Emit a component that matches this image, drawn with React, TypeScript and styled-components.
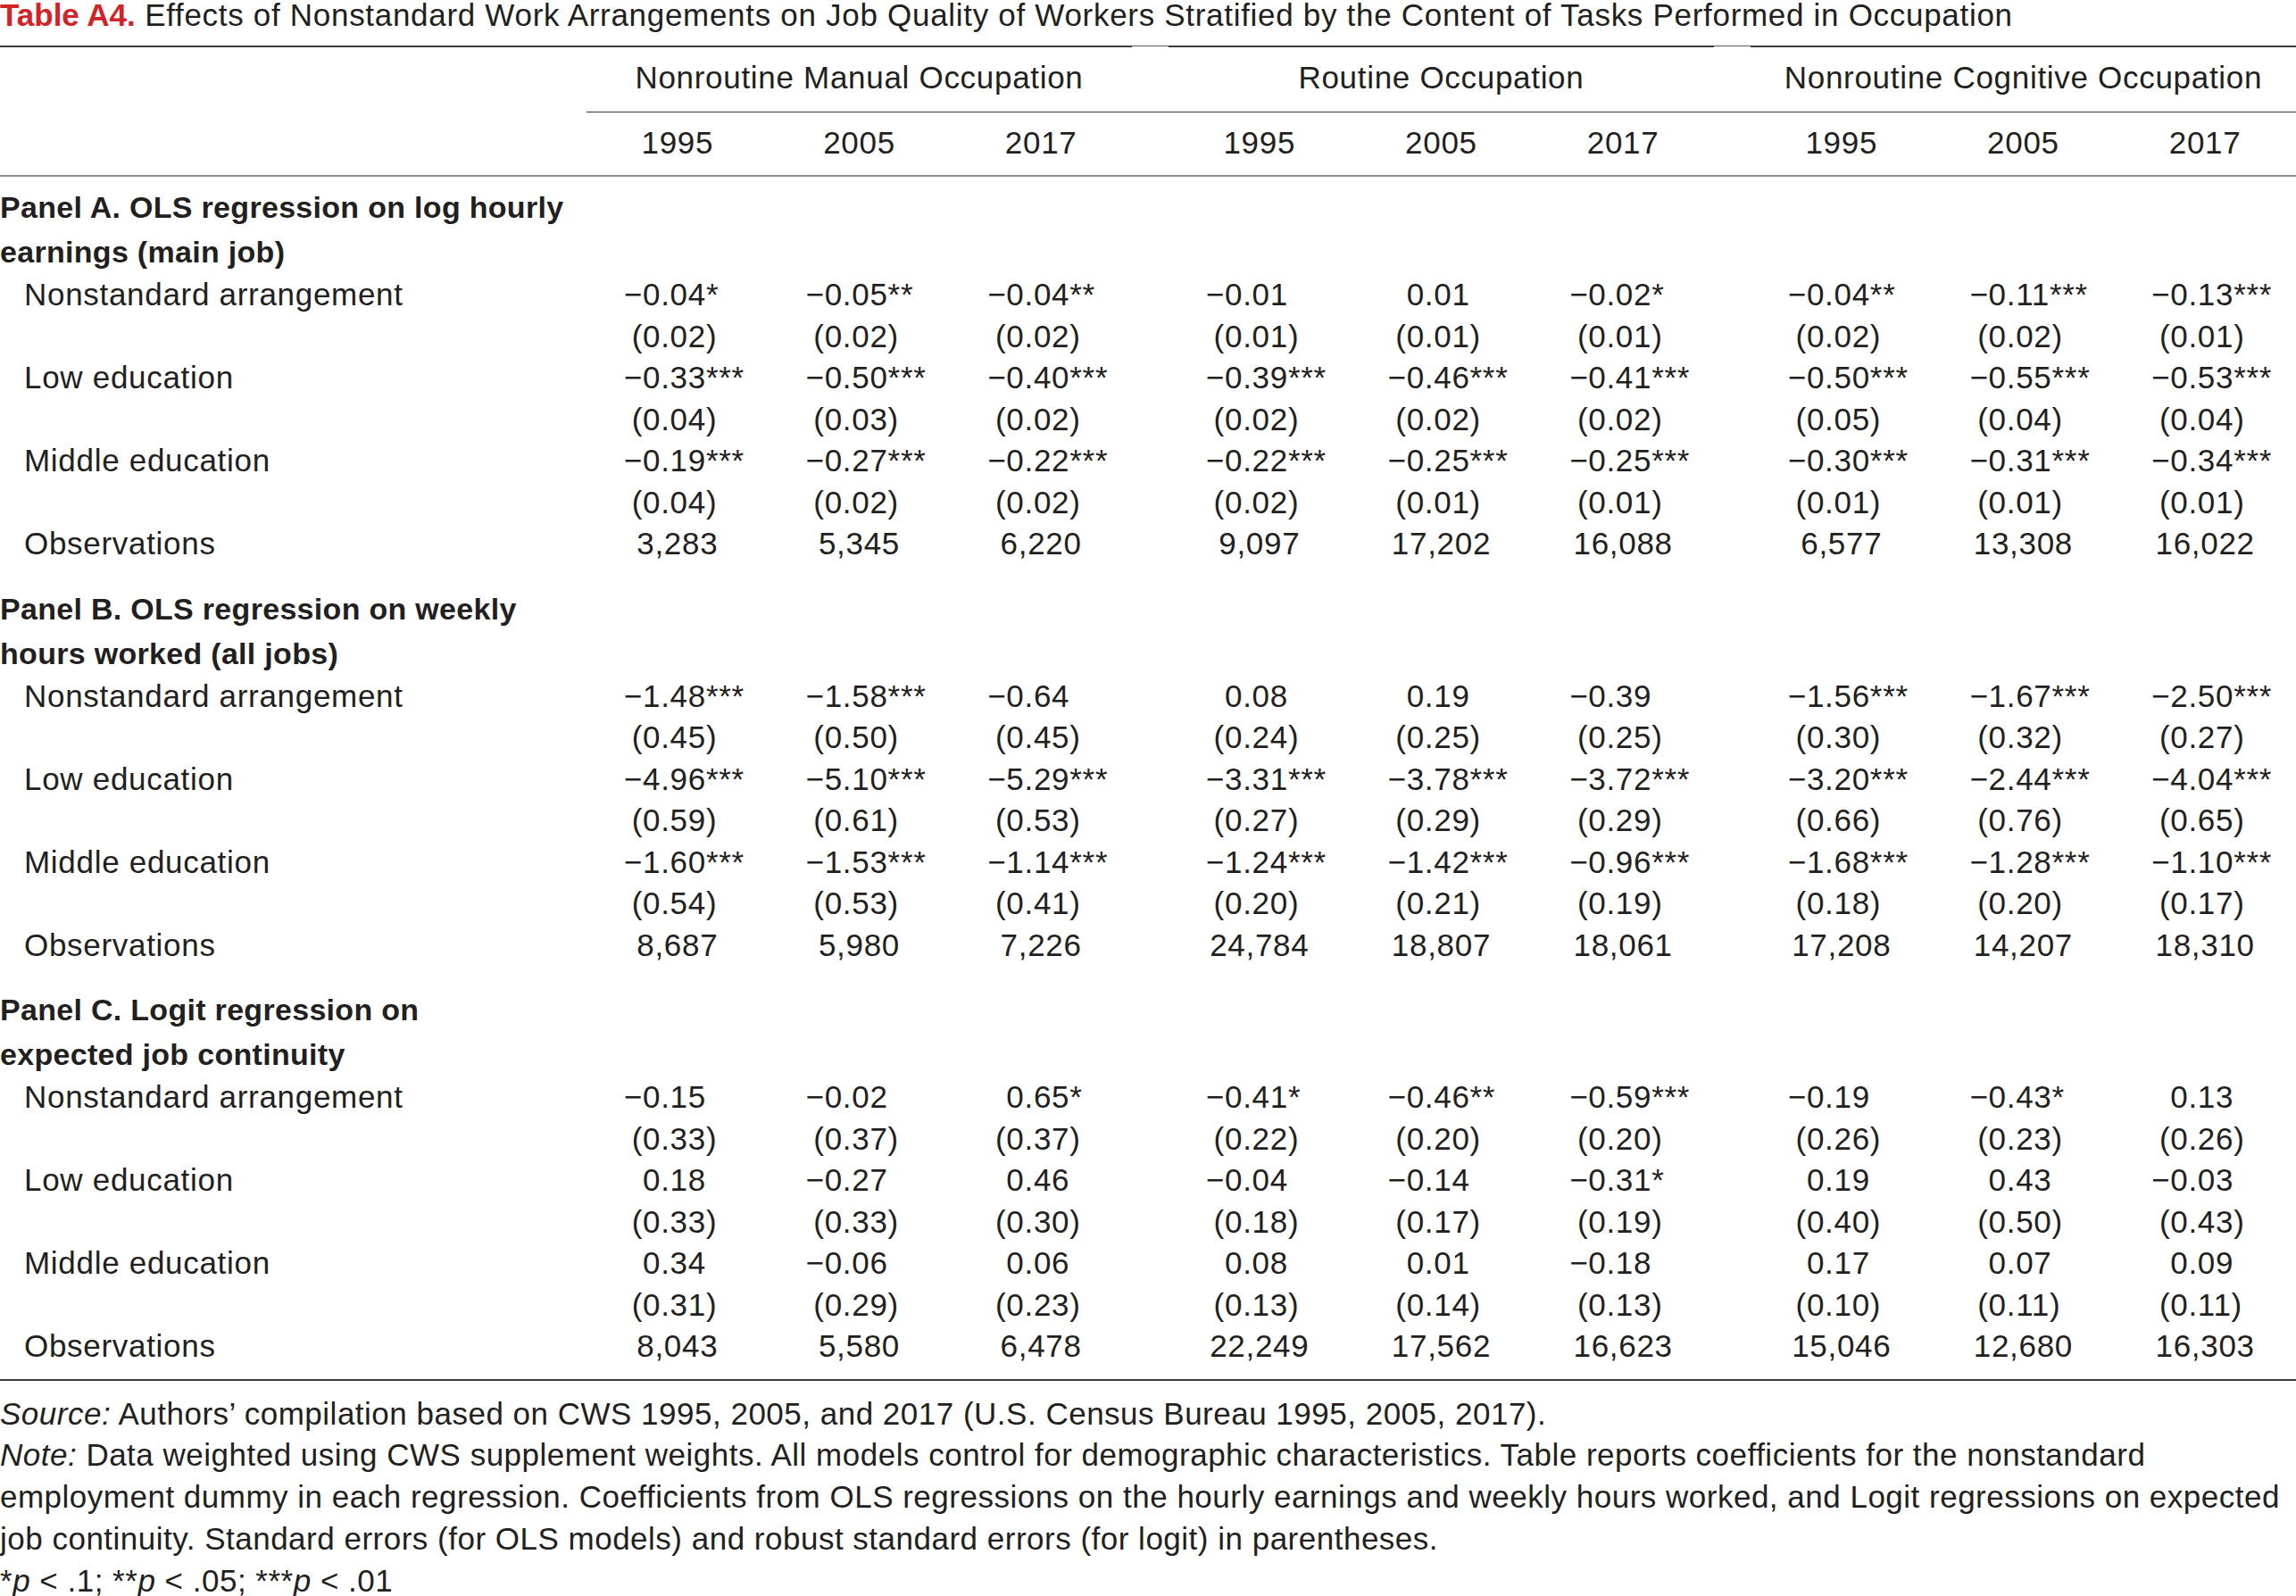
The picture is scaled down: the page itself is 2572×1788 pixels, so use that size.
import React from "react";
import styled, { createGlobalStyle } from "styled-components";

const GlobalStyle = createGlobalStyle`
  html, body { margin: 0; padding: 0; overflow: hidden; background: #ffffff; }
  body {
    font-family: "Liberation Sans", Arial, sans-serif;
    color: #231f20;
    -webkit-font-smoothing: antialiased;
  }
`;

const Page = styled.div`
  width: 2572px;
  height: 1788px;
  overflow: hidden;
  font-size: 35px;
  letter-spacing: 0.7px;
`;

const Title = styled.div`
  font-size: 35px;
  line-height: 34px;
  height: 51px;
  white-space: nowrap;
  letter-spacing: 0.7px;
`;

const TitleLabel = styled.span`
  color: #d2232a;
  font-weight: 700;
  letter-spacing: 0;
`;

const Table = styled.table`
  width: 2572px;
  table-layout: fixed;
  border-collapse: separate;
  border-spacing: 0;
  font-size: 35px;
  line-height: 46.5px;
  td, th { padding: 0; font-weight: 400; }
`;

const StubCol = styled.col`
  width: 657px;
`;
const GapCol = styled.col`
  width: 41px;
`;
const DataCol = styled.col``;

const HeadCell = styled.th<{ $gap?: boolean; $row: 1 | 2; $stub?: boolean }>`
  text-align: center;
  white-space: nowrap;
  border-top: ${(p) => (p.$row === 1 ? (p.$gap ? "1px solid #5a5a5a" : "2px solid #3a3a3a") : "none")};
  border-bottom: ${(p) =>
    p.$stub || p.$row === 2 ? "2px solid #8c8c8c" : "1px solid #3a3a3a"};
  padding-top: ${(p) => (p.$row === 1 ? (p.$gap ? "12px" : "11px") : "11px")} !important;
  padding-bottom: ${(p) => (p.$row === 1 ? "14.5px" : "12.5px")} !important;
  vertical-align: top;
`;

const PanelHeading = styled.td<{ $first?: boolean }>`
  font-weight: 700 !important;
  font-size: 34px;
  line-height: 50px;
  letter-spacing: 0.3px;
  white-space: nowrap;
  padding-top: ${(p) => (p.$first ? "9px" : "24px")} !important;
  vertical-align: top;
`;

const Label = styled.td`
  padding-left: 27px !important;
  white-space: nowrap;
`;

const NumCell = styled.td`
  white-space: nowrap;
`;

const Num = styled.span`
  display: block;
  padding-left: 41px;
`;

const Pre = styled.span`
  display: inline-block;
  width: 22px;
  text-align: right;
`;

const Centered = styled.td`
  text-align: center;
  white-space: nowrap;
`;

const LastRowCell = styled.td`
  height: 13px;
  border-bottom: 2px solid #3a3a3a;
`;

const Notes = styled.div`
  padding-top: 14px;
  line-height: 46.8px;
  font-size: 35px;
  letter-spacing: 0.5px;
`;

const NoteLine = styled.div`
  white-space: nowrap;
`;

type Panel = {
  title: [string, string];
  rows: { label: string; coef: string[]; se: string[] }[];
  obs: string[];
};

const panels: Panel[] = [
  {
    title: ["Panel A. OLS regression on log hourly", "earnings (main job)"],
    rows: [
      {
        label: "Nonstandard arrangement",
        coef: ["-0.04*", "-0.05**", "-0.04**", "-0.01", "0.01", "-0.02*", "-0.04**", "-0.11***", "-0.13***"],
        se: ["0.02", "0.02", "0.02", "0.01", "0.01", "0.01", "0.02", "0.02", "0.01"],
      },
      {
        label: "Low education",
        coef: ["-0.33***", "-0.50***", "-0.40***", "-0.39***", "-0.46***", "-0.41***", "-0.50***", "-0.55***", "-0.53***"],
        se: ["0.04", "0.03", "0.02", "0.02", "0.02", "0.02", "0.05", "0.04", "0.04"],
      },
      {
        label: "Middle education",
        coef: ["-0.19***", "-0.27***", "-0.22***", "-0.22***", "-0.25***", "-0.25***", "-0.30***", "-0.31***", "-0.34***"],
        se: ["0.04", "0.02", "0.02", "0.02", "0.01", "0.01", "0.01", "0.01", "0.01"],
      },
    ],
    obs: ["3,283", "5,345", "6,220", "9,097", "17,202", "16,088", "6,577", "13,308", "16,022"],
  },
  {
    title: ["Panel B. OLS regression on weekly", "hours worked (all jobs)"],
    rows: [
      {
        label: "Nonstandard arrangement",
        coef: ["-1.48***", "-1.58***", "-0.64", "0.08", "0.19", "-0.39", "-1.56***", "-1.67***", "-2.50***"],
        se: ["0.45", "0.50", "0.45", "0.24", "0.25", "0.25", "0.30", "0.32", "0.27"],
      },
      {
        label: "Low education",
        coef: ["-4.96***", "-5.10***", "-5.29***", "-3.31***", "-3.78***", "-3.72***", "-3.20***", "-2.44***", "-4.04***"],
        se: ["0.59", "0.61", "0.53", "0.27", "0.29", "0.29", "0.66", "0.76", "0.65"],
      },
      {
        label: "Middle education",
        coef: ["-1.60***", "-1.53***", "-1.14***", "-1.24***", "-1.42***", "-0.96***", "-1.68***", "-1.28***", "-1.10***"],
        se: ["0.54", "0.53", "0.41", "0.20", "0.21", "0.19", "0.18", "0.20", "0.17"],
      },
    ],
    obs: ["8,687", "5,980", "7,226", "24,784", "18,807", "18,061", "17,208", "14,207", "18,310"],
  },
  {
    title: ["Panel C. Logit regression on", "expected job continuity"],
    rows: [
      {
        label: "Nonstandard arrangement",
        coef: ["-0.15", "-0.02", "0.65*", "-0.41*", "-0.46**", "-0.59***", "-0.19", "-0.43*", "0.13"],
        se: ["0.33", "0.37", "0.37", "0.22", "0.20", "0.20", "0.26", "0.23", "0.26"],
      },
      {
        label: "Low education",
        coef: ["0.18", "-0.27", "0.46", "-0.04", "-0.14", "-0.31*", "0.19", "0.43", "-0.03"],
        se: ["0.33", "0.33", "0.30", "0.18", "0.17", "0.19", "0.40", "0.50", "0.43"],
      },
      {
        label: "Middle education",
        coef: ["0.34", "-0.06", "0.06", "0.08", "0.01", "-0.18", "0.17", "0.07", "0.09"],
        se: ["0.31", "0.29", "0.23", "0.13", "0.14", "0.13", "0.10", "0.11", "0.11"],
      },
    ],
    obs: ["8,043", "5,580", "6,478", "22,249", "17,562", "16,623", "15,046", "12,680", "16,303"],
  },
];

const groups = [
  "Nonroutine Manual Occupation",
  "Routine Occupation",
  "Nonroutine Cognitive Occupation",
];
const years = ["1995", "2005", "2017"];

function Coef({ v }: { v: string }) {
  const neg = v.startsWith("-");
  const rest = neg ? v.slice(1) : v;
  const m = rest.match(/^([0-9.,]+)(\**)$/);
  const body = m ? m[1] : rest;
  const stars = m ? m[2] : "";
  return (
    <Num>
      <Pre>{neg ? "\u2212" : ""}</Pre>
      {body}
      {stars}
    </Num>
  );
}

function SE({ v }: { v: string }) {
  return (
    <Num>
      <Pre>(</Pre>
      {v})
    </Num>
  );
}

function spread<T>(
  values: T[],
  render: (v: T, i: number) => React.ReactNode,
  gap: (i: number) => React.ReactNode = (i) => <td key={`gap${i}`} />
) {
  const out: React.ReactNode[] = [];
  values.forEach((v, i) => {
    if (i === 3 || i === 6) out.push(gap(i));
    out.push(render(v, i));
  });
  return out;
}

export default function App() {
  return (
    <>
      <GlobalStyle />
      <Page>
        <Title>
          <TitleLabel>Table A4.</TitleLabel> Effects of Nonstandard Work Arrangements on Job Quality of
          Workers Stratified by the Content of Tasks Performed in Occupation
        </Title>
        <Table>
          <colgroup>
            <StubCol />
            <DataCol />
            <DataCol />
            <DataCol />
            <GapCol />
            <DataCol />
            <DataCol />
            <DataCol />
            <GapCol />
            <DataCol />
            <DataCol />
            <DataCol />
          </colgroup>
          <thead>
            <tr>
              <HeadCell $row={1} $stub rowSpan={2} />
              <HeadCell $row={1} colSpan={3}>{groups[0]}</HeadCell>
              <HeadCell $row={1} $gap />
              <HeadCell $row={1} colSpan={3}>{groups[1]}</HeadCell>
              <HeadCell $row={1} $gap />
              <HeadCell $row={1} colSpan={3}>{groups[2]}</HeadCell>
            </tr>
            <tr>
              {spread(
                [...years, ...years, ...years],
                (y, i) => (
                  <HeadCell $row={2} key={i}>
                    {y}
                  </HeadCell>
                ),
                (i) => <HeadCell $row={2} key={`gap${i}`} />
              )}
            </tr>
          </thead>
          <tbody>
            {panels.map((p, pi) => (
              <React.Fragment key={pi}>
                <tr>
                  <PanelHeading $first={pi === 0}>
                    {p.title[0]}
                    <br />
                    {p.title[1]}
                  </PanelHeading>
                  <td colSpan={11} />
                </tr>
                {p.rows.map((r, ri) => (
                  <React.Fragment key={ri}>
                    <tr>
                      <Label>{r.label}</Label>
                      {spread(r.coef, (v, i) => (
                        <NumCell key={i}>
                          <Coef v={v} />
                        </NumCell>
                      ))}
                    </tr>
                    <tr>
                      <td />
                      {spread(r.se, (v, i) => (
                        <NumCell key={i}>
                          <SE v={v} />
                        </NumCell>
                      ))}
                    </tr>
                  </React.Fragment>
                ))}
                <tr>
                  <Label>Observations</Label>
                  {spread(p.obs, (v, i) => (
                    <Centered key={i}>{v}</Centered>
                  ))}
                </tr>
              </React.Fragment>
            ))}
            <tr>
              <LastRowCell colSpan={12} />
            </tr>
          </tbody>
        </Table>
        <Notes>
          <NoteLine>
            <em>Source:</em> Authors’ compilation based on CWS 1995, 2005, and 2017 (U.S. Census Bureau
            1995, 2005, 2017).
          </NoteLine>
          <NoteLine>
            <em>Note:</em> Data weighted using CWS supplement weights. All models control for demographic
            characteristics. Table reports coefficients for the nonstandard
          </NoteLine>
          <NoteLine>
            employment dummy in each regression. Coefficients from OLS regressions on the hourly earnings
            and weekly hours worked, and Logit regressions on expected
          </NoteLine>
          <NoteLine>
            job continuity. Standard errors (for OLS models) and robust standard errors (for logit) in
            parentheses.
          </NoteLine>
          <NoteLine>
            *<em>p</em> &lt; .1; **<em>p</em> &lt; .05; ***<em>p</em> &lt; .01
          </NoteLine>
        </Notes>
      </Page>
    </>
  );
}
